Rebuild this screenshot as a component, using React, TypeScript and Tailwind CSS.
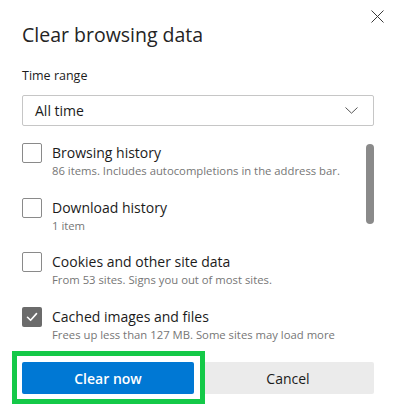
import React from "react";

const items = [
  { title: "Browsing history", sub: "86 items. Includes autocompletions in the address bar.", checked: false },
  { title: "Download history", sub: "1 item", checked: false },
  { title: "Cookies and other site data", sub: "From 53 sites. Signs you out of most sites.", checked: false },
  { title: "Cached images and files", sub: "Frees up less than 127 MB. Some sites may load more", checked: true },
];

function Checkbox({ checked }: { checked: boolean }) {
  if (checked) {
    return (
      <div className="w-[20px] h-[20px] shrink-0 rounded-[2px] bg-[#6b6b6b] flex items-center justify-center">
        <svg width="14" height="14" viewBox="0 0 14 14" fill="none">
          <path d="M2.5 7.3 L5.6 10.3 L11.5 3.6" stroke="#ffffff" strokeWidth="1.6" strokeLinecap="round" strokeLinejoin="round" />
        </svg>
      </div>
    );
  }
  return <div className="w-[20px] h-[20px] shrink-0 rounded-[2px] border border-[#8a8a8a] bg-white" />;
}

export default function App() {
  return (
    <div
      className="relative w-[393px] h-[411px] bg-white overflow-hidden text-[#1b1b1b]"
      style={{ fontFamily: '"Open Sans", "Noto Sans", sans-serif' }}
    >
      <button className="absolute top-[10px] right-[9px] w-[13px] h-[13px]" aria-label="Close">
        <svg width="13" height="13" viewBox="0 0 13 13" fill="none">
          <path d="M0.5 0.5 L12.5 12.5 M12.5 0.5 L0.5 12.5" stroke="#3a3a3a" strokeWidth="1" />
        </svg>
      </button>

      <div className="flex flex-col pl-[22px] pr-[19px]">
        <h1 className="mt-[22px] text-[19.5px] leading-[26px] font-medium text-[#242424]">Clear browsing data</h1>

        <div className="mt-[20px] text-[12.5px] leading-[16px] text-[#1b1b1b]">Time range</div>

        <div className="mt-[11px] h-[31px] border border-[#c6c6c6] rounded-[2px] flex items-center justify-between pl-[12px] pr-[15px]">
          <span className="text-[14px] leading-[18px]">All time</span>
          <svg width="13" height="7" viewBox="0 0 13 7" fill="none">
            <path d="M0.5 0.5 L6.5 6.2 L12.5 0.5" stroke="#555555" strokeWidth="1" />
          </svg>
        </div>

        <div className="mt-[17px] h-[204px] flex overflow-hidden">
          <div className="flex-1 flex flex-col">
            {items.map((it) => (
              <div key={it.title} className="h-[54.5px] shrink-0 flex items-start gap-[10px]">
                <Checkbox checked={it.checked} />
                <div className="flex flex-col">
                  <div className="text-[14px] leading-[20px] text-[#1b1b1b]">{it.title}</div>
                  <div className="text-[11.3px] leading-[16px] text-[#767676] whitespace-nowrap">{it.sub}</div>
                </div>
              </div>
            ))}
          </div>
          <div className="w-[8px] shrink-0 pt-[1px]">
            <div className="w-[8px] h-[80px] rounded-full bg-[#8a8a8a]" />
          </div>
        </div>

        <div className="mt-[15px] flex gap-[8px]">
          <div className="relative flex-1">
            <button className="w-full h-[32px] rounded-[2px] bg-[#0078d4] text-white text-[14px] font-semibold">
              Clear now
            </button>
            <span className="pointer-events-none absolute left-[-10px] right-[-11px] top-[-11px] bottom-[-10px] border-[5px] border-[#14c948]" />
          </div>
          <button className="flex-1 h-[32px] rounded-[2px] bg-[#ebebeb] text-[#1b1b1b] text-[14px]">Cancel</button>
        </div>
      </div>
    </div>
  );
}
